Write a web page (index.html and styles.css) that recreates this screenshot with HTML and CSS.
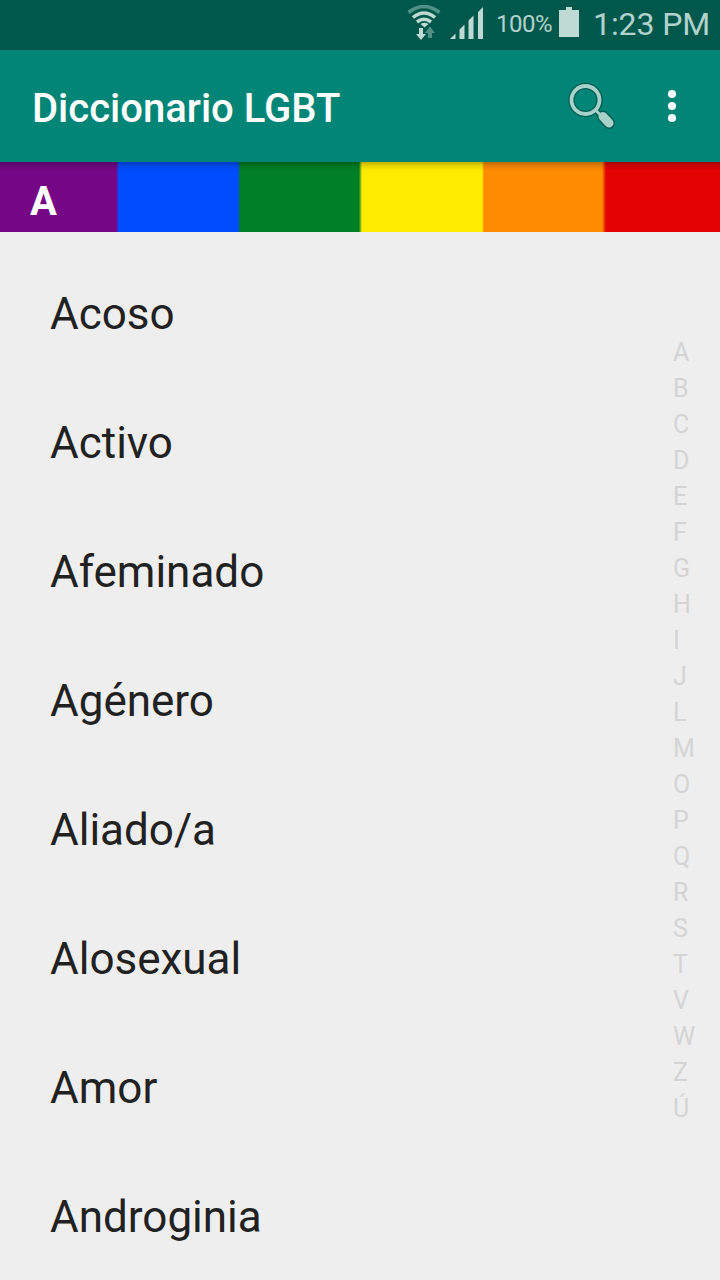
FILE: index.html
```html
<!DOCTYPE html>
<html lang="es">
<head>
    <meta charset="UTF-8">
    <meta name="viewport" content="width=device-width, initial-scale=1.0">
    <title>Diccionario LGBT</title>
    <link rel="stylesheet" href="styles.css">
</head>
<body>
    <div class="status-bar">
        <svg class="wifi" width="34" height="36" viewBox="0 0 34 36" fill="none" stroke="#bfdad5">
            <path d="M1.500 7.500Q17 -4.500 32.500 7.500" stroke="#4f9186" stroke-width="3.500"/>
            <path d="M6 12.500Q17 3.500 28 12.500" stroke-width="3.500"/>
            <path d="M10 17Q17 11.500 24 17" stroke-width="3.500"/>
            <path d="M17.500 22.500l-4-3.500q4-2.500 8 0z" fill="#bfdad5" stroke="none"/>
            <path d="M12 23h4v6h3l-5 6-5-6h3z" fill="#bfdad5" stroke="none"/>
            <path d="M21 33h4v-5h3l-5-6.500-5 6.500h3z" fill="#4f9186" stroke="none"/>
        </svg>
        <svg class="signal" width="33" height="32" viewBox="0 0 33 32" fill="#bfdad5">
            <path d="M0 32l5.500-5.500v5.500zM9.500 32v-9.500l5-5v14.500zM18.500 32V13.500l5-5V32zM28 32V5l5-5v32z"/>
        </svg>
        <span class="battery-text">100%</span>
        <svg class="battery" width="20" height="30" viewBox="0 0 20 30" fill="#bfdad5">
            <path d="M7 0h6v3h7v27H0V3h7z"/>
        </svg>
        <span class="clock">1:23 PM</span>
    </div>
    <header class="toolbar">
        <h1>Diccionario LGBT</h1>
        <svg class="search" width="48" height="48" viewBox="0 0 48 48" fill="none">
            <g stroke="#075f54" stroke-linecap="round">
                <circle cx="17.500" cy="18" r="14" stroke-width="6.500"/>
                <path d="M28 28.500l5 5" stroke-width="6"/>
                <path d="M35 34.500l6 6.500" stroke-width="12"/>
            </g>
            <g stroke="#a6d2cb">
                <circle cx="17.500" cy="18" r="14" stroke-width="3.800"/>
                <path d="M27.500 28l5 5" stroke-width="3"/>
                <path d="M35 34.500l6 6.500" stroke-width="9" stroke-linecap="round"/>
            </g>
        </svg>
        <svg class="more" width="8" height="32" viewBox="0 0 8 32" fill="#fff">
            <circle cx="4" cy="4" r="4"/>
            <circle cx="4" cy="16" r="4"/>
            <circle cx="4" cy="28" r="4"/>
        </svg>
    </header>
    <div class="section">A</div>
    <main class="content">
        <ul class="words">
            <li>Acoso</li>
            <li>Activo</li>
            <li>Afeminado</li>
            <li>Agénero</li>
            <li>Aliado/a</li>
            <li>Alosexual</li>
            <li>Amor</li>
            <li>Androginia</li>
        </ul>
        <ul class="letters">
            <li>A</li>
            <li>B</li>
            <li>C</li>
            <li>D</li>
            <li>E</li>
            <li>F</li>
            <li>G</li>
            <li>H</li>
            <li>I</li>
            <li>J</li>
            <li>L</li>
            <li>M</li>
            <li>O</li>
            <li>P</li>
            <li>Q</li>
            <li>R</li>
            <li>S</li>
            <li>T</li>
            <li>V</li>
            <li>W</li>
            <li>Z</li>
            <li>Ú</li>
        </ul>
    </main>
</body>
</html>
```

FILE: styles.css
```css
body {
    margin: 0;
    height: 1280px;
    display: flex;
    flex-direction: column;
    overflow: hidden;
    background-color: #eeeeee;
    color: #212121;
    font-family: Roboto, sans-serif;
}
ul {
    list-style: none;
    margin: 0;
    padding: 0;
}
svg {
    display: block;
    flex: none;
}

/* Barra de estado */
.status-bar {
    display: flex;
    flex: none;
    align-items: flex-start;
    height: 50px;
    padding-left: 407px;
    background-color: #00574b;
    color: #b4d2cd;
    white-space: nowrap;
}
.wifi {
    margin-top: 5px;
}
.signal {
    margin: 7px 0 0 9px;
}
.battery-text {
    width: 63px;
    margin-left: 13px;
    font-size: 24px;
    letter-spacing: -0.5px;
    line-height: 48px;
}
.battery {
    margin-top: 7px;
}
.clock {
    margin-left: 14px;
    font-size: 32px;
    letter-spacing: -0.1px;
    line-height: 48px;
}

/* Barra de herramientas */
.toolbar {
    display: flex;
    flex: none;
    align-items: center;
    height: 112px;
    box-sizing: border-box;
    padding: 0 44px 0 32px;
    background-color: #008577;
}
.toolbar h1 {
    flex: 1;
    margin: 0;
    padding-top: 5px;
    color: #fff;
    font-size: 40px;
    font-weight: 500;
    line-height: 48px;
}
.search {
    margin-right: 52px;
}

/* Encabezado con los colores de la bandera */
.section {
    flex: none;
    height: 70px;
    box-sizing: border-box;
    padding: 5px 0 0 30px;
    color: #fff;
    font-size: 40px;
    font-weight: 700;
    line-height: 70px;
    background: linear-gradient(rgba(0, 0, 0, 0.25), rgba(0, 0, 0, 0.1) 4px, transparent 9px),
        linear-gradient(to right, #750787 116px, #004dff 119px, #004dff 238px, #008026 240px, #008026 359px, #ffed00 362px, #ffed00 482px, #ff8c00 484px, #ff8c00 602px, #e40303 606px);
}

/* Lista de palabras e indice lateral */
.content {
    flex: 1;
    min-height: 0;
    display: flex;
    justify-content: space-between;
}
.words {
    padding: 18px 0 0 50px;
}
.words li {
    height: 129px;
    font-size: 44px;
    line-height: 129px;
}
.letters {
    width: 47px;
    padding-top: 103px;
    color: #d4d4d4;
    font-size: 25px;
}
.letters li {
    height: 36px;
    line-height: 36px;
}
```
